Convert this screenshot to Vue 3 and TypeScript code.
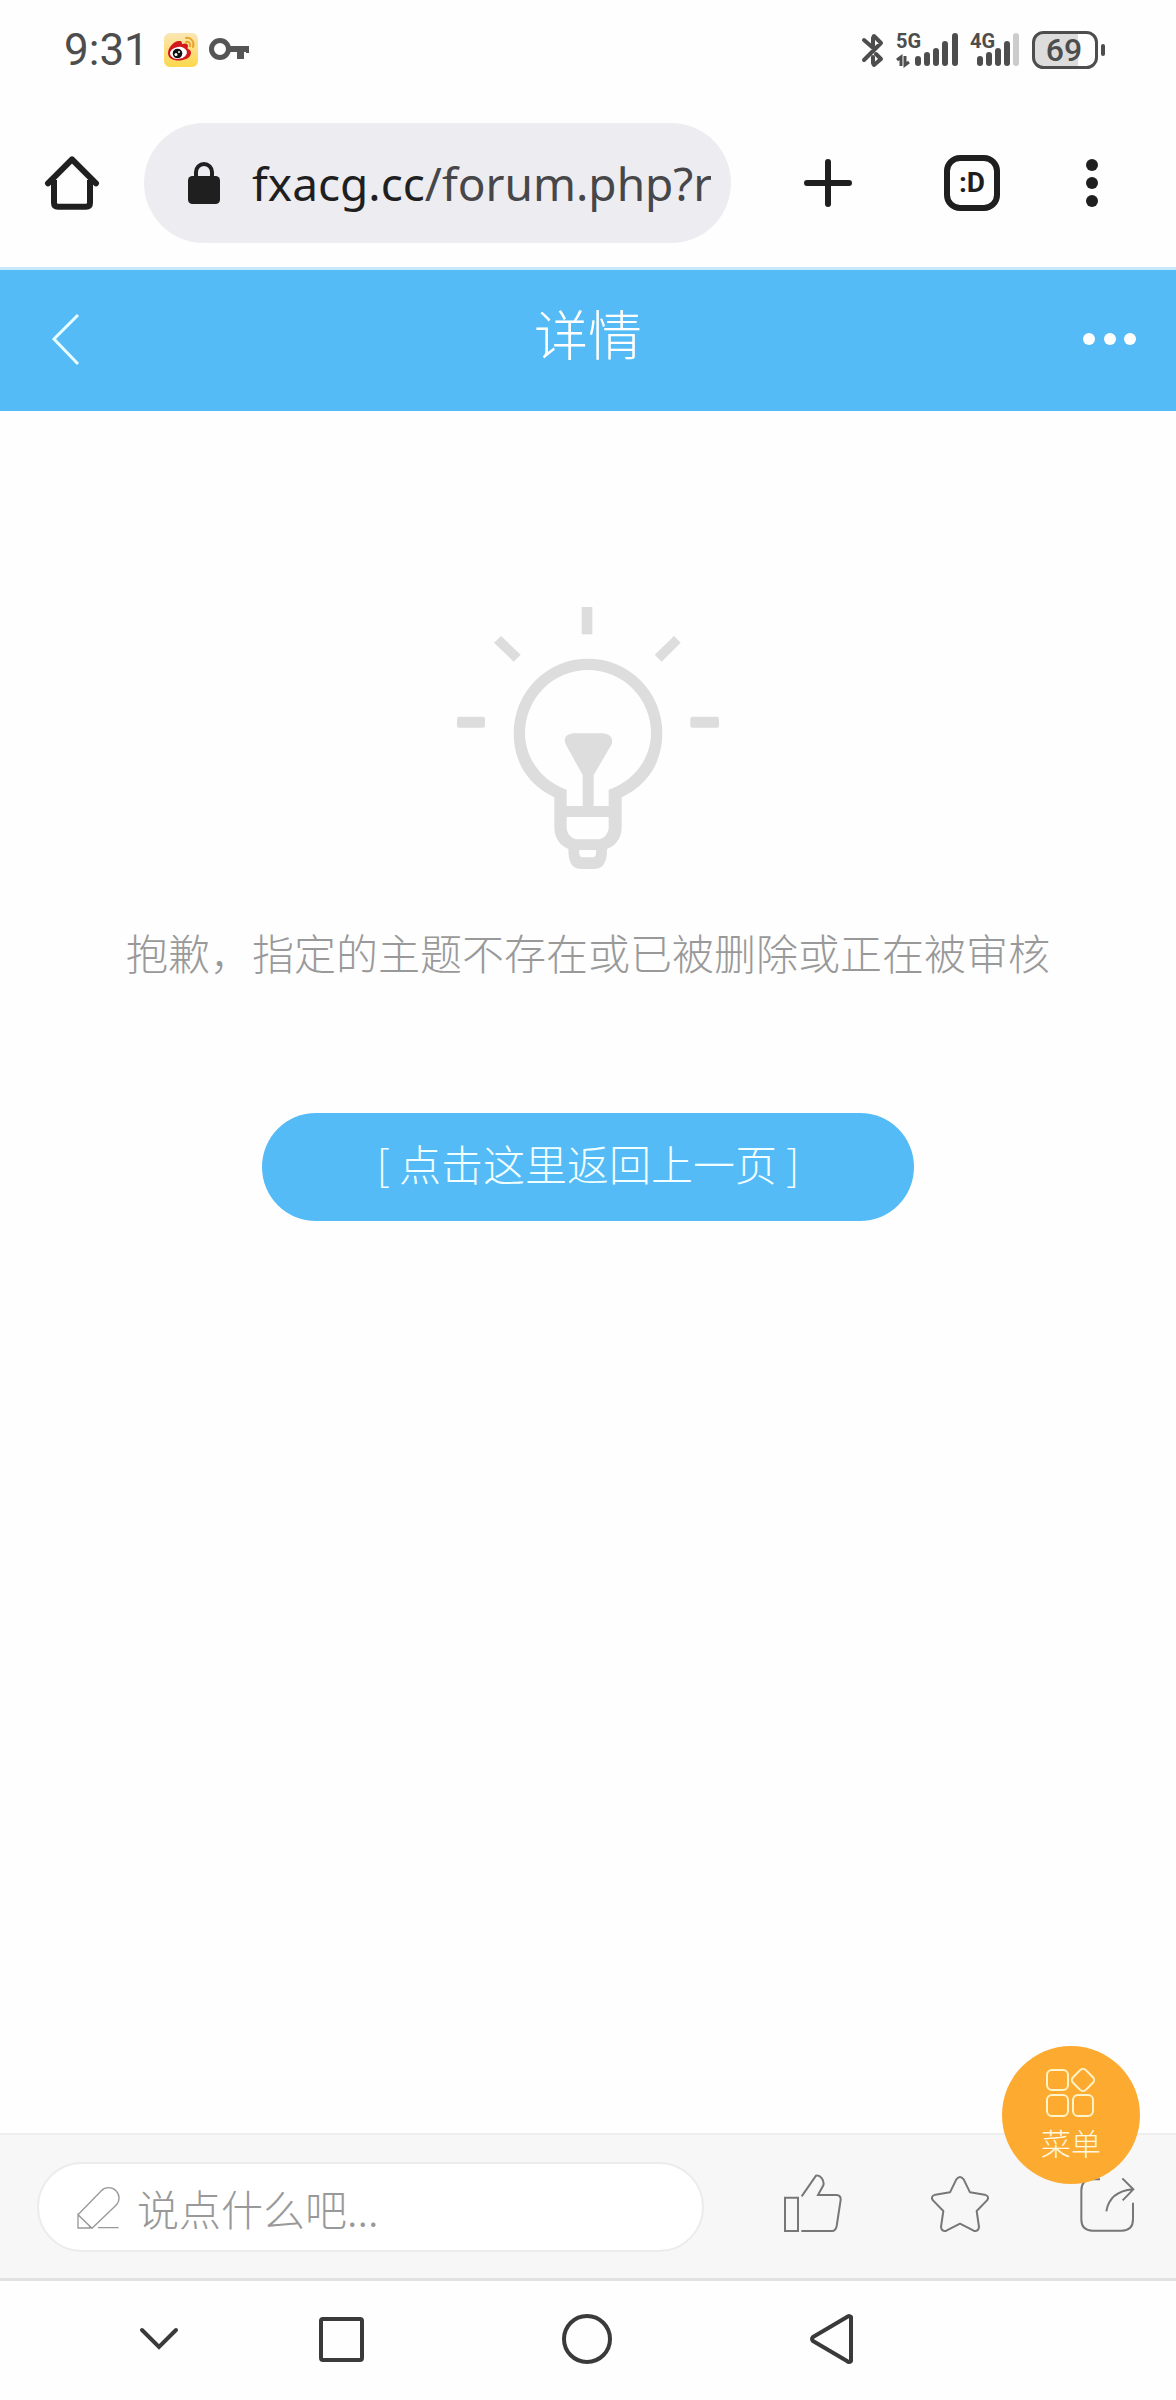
<script setup lang="ts">
import { ref } from 'vue'

interface Bar {
  x: number
  top: number
  dim?: boolean
}

const host = 'fxacg.cc'
const path = '/forum.php?r'
const comment = ref('')

const bars5g: Bar[] = [
  { x: 19, top: 24 },
  { x: 28, top: 20 },
  { x: 37, top: 16 },
  { x: 46, top: 9 },
  { x: 56, top: 1 },
]
const bars4g: Bar[] = [
  { x: 7, top: 24 },
  { x: 16, top: 20 },
  { x: 25, top: 16 },
  { x: 34, top: 9 },
  { x: 43, top: 1, dim: true },
]
</script>

<template>
  <div class="screen">
    <div class="status">
      <span class="clock">9:31</span>
      <svg class="weibo" viewBox="0 0 34 34" aria-hidden="true">
        <defs>
          <linearGradient id="weibo-bg" x1="0" y1="0" x2="0" y2="1">
            <stop offset="0" stop-color="#fbe6b4" />
            <stop offset="1" stop-color="#fbd84c" />
          </linearGradient>
        </defs>
        <rect width="34" height="34" rx="6" fill="url(#weibo-bg)" />
        <path d="M4 20C4 14 11 7 16 8c2 0 2 2 2 3 3-1 6-1 6 2 0 1-1 2 0 3 3 1 4 4 2 7-4 6-22 7-22-3z" fill="#d3181d" />
        <ellipse cx="14.500" cy="20" rx="8.500" ry="6" fill="#fff" transform="rotate(-8 14 20)" />
        <circle cx="13.500" cy="20.500" r="4.800" fill="#111" />
        <circle cx="12" cy="21.500" r="1.500" fill="#fff" />
        <circle cx="15" cy="19" r="1" fill="#fff" />
        <path d="M22 5c5-1 9 4 7 9M22 9c3-1 5 2 4 4" fill="none" stroke="#e8a52c" stroke-width="2" stroke-linecap="round" />
      </svg>
      <svg class="key" viewBox="0 0 42 26" aria-hidden="true">
        <circle cx="12" cy="12" r="8.500" fill="none" stroke="#555" stroke-width="5" />
        <path d="M22 9h19v7h-3v-1h-2v7h-7v-7h-7z" fill="#555" />
      </svg>
      <span class="spacer"></span>
      <svg class="bluetooth" viewBox="0 0 24 36" aria-hidden="true">
        <path d="M3 8l8 7M3 28L20 11l-7-7-1 2v10M15 22l5 5-7 6-1-2v-6" fill="none" stroke="#4d4d4d" stroke-width="4" stroke-linecap="round" stroke-linejoin="round" />
      </svg>
      <svg class="signal-5g" viewBox="0 -5 62 46" aria-hidden="true">
        <text x="0" y="16" class="net">5G</text>
        <path d="M1 28l4-3v9M9 24v9l4-3" fill="none" stroke="#4d4d4d" stroke-width="3" />
        <rect v-for="b in bars5g" :key="b.x" :x="b.x" :y="b.top" width="6" :height="34 - b.top" rx="3" fill="#4d4d4d" />
      </svg>
      <svg class="signal-4g" viewBox="0 -5 50 46" aria-hidden="true">
        <text x="0" y="16" class="net">4G</text>
        <rect v-for="b in bars4g" :key="b.x" :x="b.x" :y="b.top" width="6" :height="34 - b.top" rx="3" :fill="b.dim ? '#ccc' : '#4d4d4d'" />
      </svg>
      <svg class="battery" viewBox="0 0 74 38" aria-hidden="true">
        <rect x="1" y="1" width="45" height="36" rx="9" fill="#dcdcdc" />
        <rect x="36" y="2" width="10" height="34" fill="#dcdcdc" />
        <rect x="1.500" y="1.500" width="63" height="35" rx="10" fill="none" stroke="#4d4d4d" stroke-width="3" />
        <rect x="69" y="13" width="4" height="12" rx="2" fill="#4d4d4d" />
        <text x="32" y="30" text-anchor="middle" class="charge">69</text>
      </svg>
    </div>

    <div class="browser">
      <button class="tool" type="button" aria-label="Home">
        <svg viewBox="132 465 168 168">
          <path d="M144 550L216 478l72 72" fill="none" stroke="#1f1f1f" stroke-width="18" stroke-linecap="round" stroke-linejoin="round" />
          <path d="M162 540v68q0 12 12 12h84q12 0 12-12v-68" fill="none" stroke="#1f1f1f" stroke-width="18" />
        </svg>
      </button>
      <button class="address" type="button">
        <svg class="lock" viewBox="558 480 108 132" aria-hidden="true">
          <rect x="564" y="525" width="96" height="84" rx="13" fill="#1f1f1f" />
          <path d="M588 530v-17a24 24 0 0 1 48 0v17" fill="none" stroke="#1f1f1f" stroke-width="12" />
        </svg>
        <span class="url">{{ host }}<span class="path">{{ path }}</span></span>
      </button>
      <button class="tool plus" type="button" aria-label="New tab">
        <svg viewBox="0 0 56 56">
          <path d="M28 7v42M7 28h42" stroke="#1f1f1f" stroke-width="6" stroke-linecap="round" />
        </svg>
      </button>
      <button class="tool tabs" type="button">:D</button>
      <button class="tool more" type="button" aria-label="More">
        <svg viewBox="0 0 56 56" fill="#1f1f1f">
          <circle cx="28" cy="10" r="6" />
          <circle cx="28" cy="28" r="6" />
          <circle cx="28" cy="46" r="6" />
        </svg>
      </button>
    </div>

    <header class="header">
      <a class="header-link" href="#back" aria-label="Back">
        <svg viewBox="0 0 56 56">
          <path d="M39 4L15 28l24 25" fill="none" stroke="#e8fdff" stroke-width="3" />
        </svg>
      </a>
      <h1>详情</h1>
      <button class="header-link" type="button" aria-label="More options">
        <svg viewBox="0 0 56 56" fill="#fff">
          <circle cx="8" cy="28" r="6" />
          <circle cx="29" cy="28" r="6" />
          <circle cx="49" cy="28" r="6" />
        </svg>
      </button>
    </header>

    <main class="content">
      <svg class="bulb" viewBox="80 80 786 786" aria-hidden="true">
        <g fill="#ddd">
          <rect x="454" y="80" width="32" height="82" />
          <rect x="80" y="409" width="84" height="33" rx="6" />
          <rect x="780" y="409" width="86" height="33" rx="6" />
          <path d="M212 167l59 56-21 21-59-57z" />
          <path d="M731 167l20 20-57 57-21-21z" />
          <path d="M430 459h88q34 4 26 33l-54 92v96h-33v-96l-51-92q-12-29 24-33z" />
          <path fill-rule="evenodd" d="M372 651C290 612 250 542 250 458a223 223 0 0 1 446 0C696 542 656 612 574 651v95q-4 44-44 60c0 34-8 60-38 60h-40c-30 0-38-26-38-60q-38-16-42-60zM409 628v49h126v-49C616 600 662 530 662 458a188 188 0 0 0-378 0c0 72 46 142 125 170zM409 710v36q6 26 28 31h70q22-5 28-31v-36zM447 809v15l6 7h38l6-7v-15z" />
        </g>
      </svg>
      <p class="message">抱歉，指定的主题不存在或已被删除或正在被审核</p>
      <a class="return" href="#back">[ 点击这里返回上一页 ]</a>
    </main>

    <footer class="reply-bar">
      <label class="reply">
        <svg class="pencil" viewBox="230 226 135 135" aria-hidden="true">
          <path d="M236 315l70-72a31 31 0 0 1 44 44l-72 69-42-41v40h36l-2-8M296 354h62" fill="none" stroke="#999" stroke-width="4" />
        </svg>
        <input v-model="comment" type="text" placeholder="说点什么吧..." aria-label="说点什么吧" />
      </label>
      <button class="action" type="button" aria-label="Like">
        <svg viewBox="21 462 180 198">
          <path d="M27 533h39v100H27zM77 529l43-62c12-4 26 14 22 29l-16 29h56q13 1 12 15l-12 78q-3 15-14 15H76" />
        </svg>
      </button>
      <button class="action" type="button" aria-label="Favourite">
        <svg viewBox="462 462 180 198">
          <path d="M541 478q11-14 22 0l19 39 44 7q16 5 7 17l-31 32 7 48q-2 15-16 11l-41-21-41 21q-14 4-16-11l7-48-31-32q-9-12 7-17l44-7z" stroke-linejoin="round" />
        </svg>
      </button>
      <button class="action" type="button" aria-label="Share">
        <svg viewBox="903 462 180 198">
          <path d="M972 478h-22q-34 0-34 34v86q0 34 34 34h87q34 0 34-34v-50M991 574q10-60 80-66M1039 475l33 33-32 33" />
        </svg>
      </button>
      <button class="menu" type="button">
        <svg viewBox="0 0 52 52" fill="none" stroke="#fff3c8" stroke-width="2" aria-hidden="true">
          <rect x="2" y="4" width="21" height="20" rx="5" />
          <rect x="2" y="29" width="21" height="21" rx="5" />
          <rect x="28" y="29" width="20" height="21" rx="5" />
          <rect x="29" y="5" width="18" height="18" rx="4" transform="rotate(45 38 14)" />
        </svg>
        <span>菜单</span>
      </button>
    </footer>

    <nav class="system">
      <button type="button" aria-label="Hide">
        <svg viewBox="0 0 56 56"><path d="M11 19l17 17 17-17" stroke-linecap="round" /></svg>
      </button>
      <button type="button" aria-label="Recents">
        <svg viewBox="0 0 56 56"><rect x="8" y="8" width="41" height="41" rx="2" /></svg>
      </button>
      <button type="button" aria-label="Home screen">
        <svg viewBox="0 0 56 56"><circle cx="28" cy="28" r="23" /></svg>
      </button>
      <button type="button" aria-label="Go back">
        <svg viewBox="0 0 56 56"><path d="M46 6v44q-2 2-4 0L8 30q-2-2 0-4L42 6q2-2 4 0z" stroke-linejoin="round" /></svg>
      </button>
    </nav>
  </div>
</template>

<style>
body {
  margin: 0;
  background: #fefefe;
}
</style>

<style scoped>
.screen {
  display: flex;
  flex-direction: column;
  min-height: 100vh;
  background: #fefefe;
  font-family: "Noto Sans CJK SC", "Noto Sans", sans-serif;
  font-weight: 300;
}
button,
input {
  margin: 0;
  padding: 0;
  border: 0;
  background: none;
  font: inherit;
  color: inherit;
}
svg {
  display: block;
  flex: none;
}
a {
  text-decoration: none;
}
.status {
  display: flex;
  align-items: center;
  height: 100px;
  padding: 0 70px 0 64px;
}
.clock {
  font: 400 44px/48px Roboto, sans-serif;
  color: #4d4d4d;
}
.weibo {
  width: 34px;
  height: 34px;
  margin-left: 15px;
}
.key {
  width: 42px;
  height: 26px;
  margin-left: 10px;
}
.spacer {
  flex: 1;
}
.bluetooth {
  width: 24px;
  height: 36px;
}
.signal-5g {
  width: 62px;
  height: 46px;
  margin-left: 11px;
}
.signal-4g {
  width: 50px;
  height: 46px;
  margin-left: 12px;
}
.battery {
  width: 74px;
  height: 38px;
  margin-left: 12px;
}
.net {
  font: 700 20px Roboto, sans-serif;
  fill: #4d4d4d;
}
.charge {
  font: 500 32px Roboto, sans-serif;
  fill: #4d4d4d;
}
.browser {
  display: flex;
  align-items: center;
  padding: 23px 56px 24px 44px;
  border-bottom: 3px solid #c8e8fb;
}
.tool {
  flex: none;
  width: 56px;
  height: 56px;
}
.address {
  flex: 1;
  min-width: 0;
  display: flex;
  align-items: center;
  gap: 30px;
  height: 120px;
  margin: 0 69px 0 44px;
  padding: 0 20px 0 42px;
  border-radius: 60px;
  background: #ededf1;
}
.lock {
  width: 36px;
  height: 44px;
}
.url {
  overflow: hidden;
  white-space: nowrap;
  font: 400 46px/64px "Noto Sans", sans-serif;
  color: #1f1f22;
}
.path {
  color: #47474a;
}
.tabs {
  margin: 0 64px 0 88px;
  border: 6px solid #1f1f1f;
  border-radius: 16px;
  font: 700 28px/40px Roboto, sans-serif;
  color: #1f1f1f;
}
.header {
  display: flex;
  align-items: center;
  justify-content: space-between;
  height: 137px;
  padding: 0 39px 4px;
  background: #54bbf6;
}
.header-link {
  width: 56px;
  height: 56px;
}
h1 {
  margin: 0;
  padding-bottom: 12px;
  font-size: 54px;
  line-height: 72px;
  font-weight: 300;
  color: #fff;
}
.content {
  flex: 1;
  display: flex;
  flex-direction: column;
  align-items: center;
  padding-top: 196px;
}
.bulb {
  width: 262px;
  height: 262px;
}
.message {
  margin: 53px 0 0;
  font-size: 42px;
  line-height: 60px;
  color: #999;
}
.return {
  margin-top: 131px;
  padding: 20px 114px 28px;
  border-radius: 54px;
  background: #54bbf6;
  font-size: 42px;
  line-height: 60px;
  color: #f0ffff;
}
.reply-bar {
  position: relative;
  display: flex;
  align-items: center;
  padding: 27px 39px 26px 37px;
  border-top: 2px solid #eee;
  background: #f7f7f7;
}
.reply {
  flex: 1;
  min-width: 0;
  box-sizing: border-box;
  display: flex;
  align-items: center;
  gap: 16px;
  height: 90px;
  padding: 0 37px;
  border: 2px solid #ececec;
  border-radius: 45px;
  background: #fff;
}
.pencil {
  width: 45px;
  height: 45px;
}
.reply input {
  flex: 1;
  min-width: 0;
  height: 60px;
  font-size: 42px;
  outline: none;
  color: #666;
}
.reply input::placeholder {
  color: #999;
  opacity: 1;
}
.action {
  flex: none;
  width: 60px;
  height: 66px;
  margin-left: 87px;
}
.reply + .action {
  margin-left: 79px;
}
.action svg {
  fill: none;
  stroke: #777;
  stroke-width: 6px;
}
.menu {
  position: absolute;
  top: -89px;
  right: 36px;
  display: flex;
  flex-direction: column;
  align-items: center;
  gap: 4px;
  width: 138px;
  height: 138px;
  padding-bottom: 4px;
  border-radius: 50%;
  background: #fcab30;
  font-size: 30px;
  line-height: 40px;
  color: #fff8e0;
}
.menu svg {
  width: 52px;
  height: 52px;
  margin-top: 20px;
}
.system {
  display: grid;
  grid-template-columns: 118fr 246fr 246fr 246fr;
  align-items: center;
  justify-items: center;
  height: 116px;
  padding: 0 220px 3px 100px;
  border-top: 3px solid #e2e2e2;
}
.system button {
  width: 56px;
  height: 56px;
}
.system svg {
  fill: none;
  stroke: #3a3a3a;
  stroke-width: 4px;
}
</style>
